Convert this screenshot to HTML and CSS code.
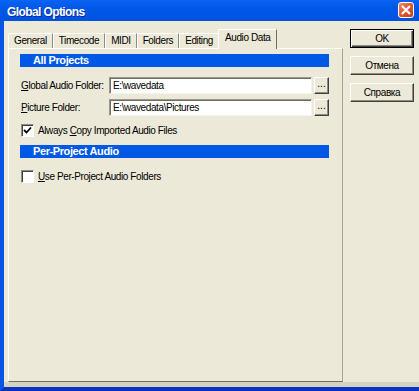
FILE: index.html
```html
<!DOCTYPE html>
<html lang="en">
  <head>
    <meta charset="UTF-8">
    <title>Global Options</title>
    <link rel="stylesheet" href="styles.css">
  </head>
  <body>
    <div class="window">
      <div class="titlebar">
        <span class="title">Global Options</span>
        <button class="close">
          <svg width="10" height="10" viewBox="0 0 10 10">
            <path d="M1 1 L9 9 M9 1 L1 9" stroke="#fff" stroke-width="2.2"/>
          </svg>
        </button>
      </div>
      <div class="frame">
        <div class="sheet">
          <ul class="tabs">
            <li class="tab">General</li>
            <li class="tab">Timecode</li>
            <li class="tab">MIDI</li>
            <li class="tab">Folders</li>
            <li class="tab">Editing</li>
            <li class="tab active">Audio Data</li>
          </ul>
          <div class="panel">
            <div class="group">All Projects</div>
            <div class="field first">
              <label><u>G</u>lobal Audio Folder:</label>
              <input type="text" value="E:\wavedata">
              <button class="browse">...</button>
            </div>
            <div class="field">
              <label><u>P</u>icture Folder:</label>
              <input type="text" value="E:\wavedata\Pictures">
              <button class="browse">...</button>
            </div>
            <div class="check first-check">
              <span class="box">
                <svg width="9" height="9" viewBox="0 0 9 9">
                  <path d="M1 4 L3.5 6.5 L8 1.5" stroke="#000" stroke-width="1.8" fill="none"/>
                </svg>
              </span>
              <span>Always <u>C</u>opy Imported Audio Files</span>
            </div>
            <div class="group second">Per-Project Audio</div>
            <div class="check last-check">
              <span class="box"></span>
              <span><u>U</u>se Per-Project Audio Folders</span>
            </div>
          </div>
        </div>
        <div class="actions">
          <button class="btn default">OK</button>
          <button class="btn">Отмена</button>
          <button class="btn">Справка</button>
        </div>
      </div>
    </div>
  </body>
</html>
```

FILE: styles.css
```css
* {
  box-sizing: border-box;
}
html, body {
  margin: 0px;
}
body {
  background-color: #ECE9D8;
  color: black;
  font-family: "Liberation Sans", Arial, sans-serif;
  font-size: 10px;
  letter-spacing: -0.4px;
}
.window {
  width: 419px;
  height: 391px;
  display: flex;
  flex-direction: column;
}
.titlebar {
  height: 21px;
  background: linear-gradient(#0A63F4, #0058E8 40%, #0052E0);
  display: flex;
  align-items: flex-start;
  justify-content: space-between;
  padding: 0 5px 0 7px;
}
.title {
  color: white;
  font-weight: bold;
  font-size: 12px;
  letter-spacing: -0.6px;
  margin-top: 5px;
  text-shadow: 1px 1px #0A2A9A;
}
.close {
  width: 16px;
  height: 16px;
  margin-top: 2px;
  padding: 0;
  border: 1px solid white;
  border-radius: 3px;
  background: linear-gradient(135deg, #F08A62, #E0532A 55%, #C8401C);
  display: flex;
  align-items: center;
  justify-content: center;
}
.frame {
  flex: 1;
  display: flex;
  gap: 7px;
  border-left: 4px solid #0A55E6;
  border-bottom: 4px solid #0733BE;
  padding: 0 5px 5px 4px;
  box-shadow: inset 0 -5px #D6D2C2;
}
.sheet {
  width: 335px;
  display: flex;
  flex-direction: column;
  padding-top: 8px;
}
.tabs {
  display: flex;
  align-items: flex-end;
  height: 19px;
  margin: 0;
  padding: 0;
  list-style-type: none;
  position: relative;
  z-index: 1;
}
.tab {
  height: 15px;
  padding: 0 5px;
  line-height: 14px;
  white-space: nowrap;
  border: 1px solid;
  border-color: white #8F8C80 transparent white;
  border-bottom: none;
}
.tab.active {
  height: 20px;
  margin: 0 -2px -1px -1px;
  padding: 0 6px;
  line-height: 15px;
  background-color: #ECE9D8;
  border-right-color: #716F64;
}
.panel {
  flex: 1;
  border: 1px solid;
  border-color: white #A6A398 #716F64 white;
  padding-top: 5px;
}
.group {
  height: 13px;
  margin: 0 13px 0 11px;
  padding-left: 13px;
  line-height: 13px;
  background-color: #0058E6;
  color: white;
  font-weight: bold;
  font-size: 11px;
}
.group.second {
  margin-top: 8px;
}
.field {
  display: flex;
  align-items: center;
  height: 17px;
  margin: 5px 13px 0 12px;
}
.field.first {
  margin-top: 10px;
}
.field label {
  width: 88px;
  white-space: nowrap;
}
.field input {
  width: 203px;
  height: 17px;
  margin: 0 2px 0 0;
  padding: 0 3px;
  font: inherit;
  letter-spacing: inherit;
  background-color: white;
  border: 1px solid;
  border-color: #9A978C #F4F3EE #F4F3EE #9A978C;
  box-shadow: inset 1px 1px #716F64;
}
.browse {
  width: 15px;
  height: 17px;
  padding: 0 0 4px;
  font: inherit;
  line-height: 10px;
  background-color: #ECE9D8;
  border: 1px solid;
  border-color: white #404040 #404040 white;
  box-shadow: inset -1px -1px #8F8C80;
}
.check {
  display: flex;
  align-items: center;
  gap: 4px;
  height: 13px;
  margin-left: 12px;
  white-space: nowrap;
}
.first-check {
  margin-top: 8px;
}
.last-check {
  margin-top: 12px;
}
.box {
  width: 13px;
  height: 13px;
  background-color: white;
  border: 1px solid;
  border-color: #8F8C80 white white #8F8C80;
  box-shadow: inset 1px 1px #404040;
  display: flex;
  align-items: center;
  justify-content: center;
}
.actions {
  width: 64px;
  display: flex;
  flex-direction: column;
  gap: 8px;
  padding-top: 8px;
}
.btn {
  height: 19px;
  padding: 0;
  font: inherit;
  letter-spacing: inherit;
  background-color: #ECE9D8;
  border: 1px solid;
  border-color: white #404040 #404040 white;
  box-shadow: inset -1px -1px #8F8C80;
}
.btn.default {
  border-color: black;
  box-shadow: inset 1px 1px white, inset -1px -1px #404040, inset -2px -2px #8F8C80;
}
```
